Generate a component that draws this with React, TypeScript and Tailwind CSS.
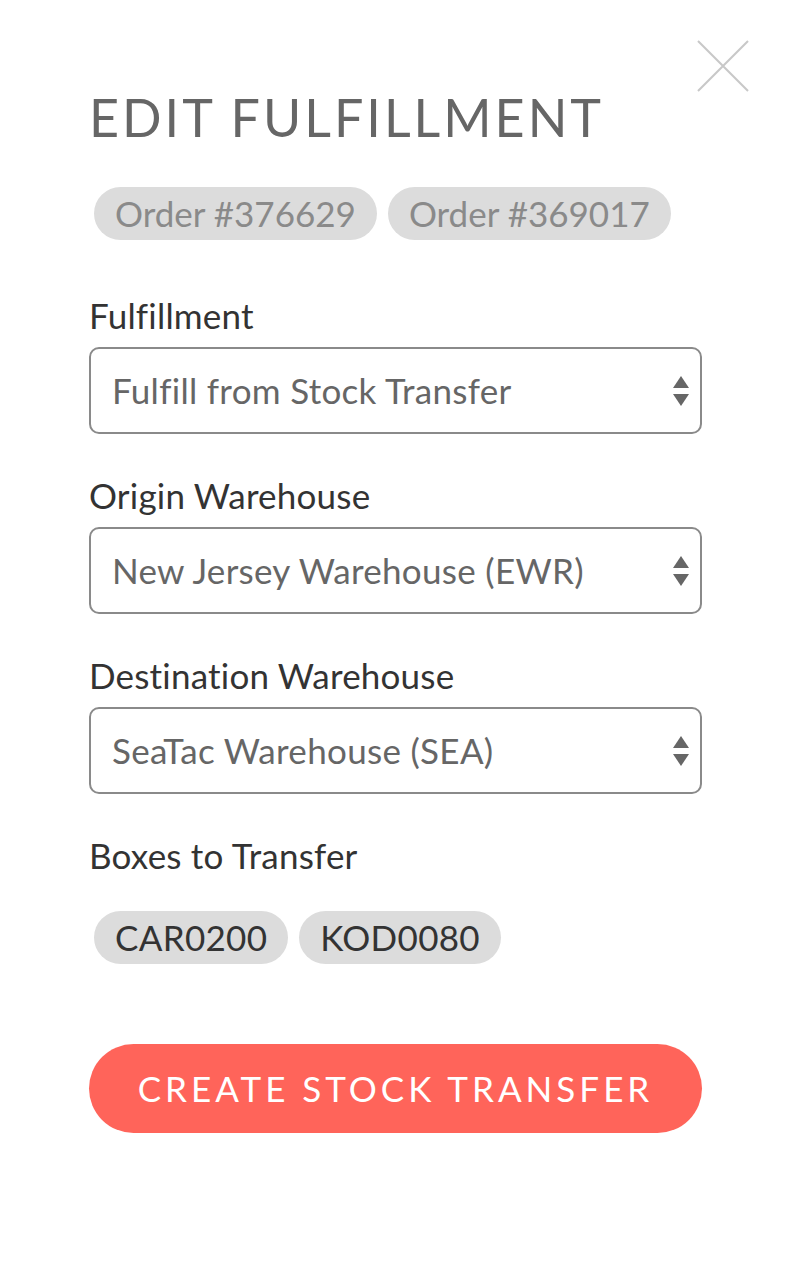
import React from "react";

function Chip({ children, dark }: { children: React.ReactNode; dark?: boolean }) {
  return (
    <span
      className={`inline-flex h-[53px] items-center rounded-full bg-[#dcdcdc] px-[21px] text-[35px] leading-none ${
        dark ? "text-[#333333] tracking-[0.3px]" : "text-[#8a8a8a] tracking-[0px]"
      }`}
    >
      {children}
    </span>
  );
}

function Arrows() {
  return (
    <svg width="18" height="34" viewBox="0 0 18 34" className="shrink-0">
      <path d="M9 2 L17 14 L1 14 Z" fill="#666666" />
      <path d="M9 32 L17 20 L1 20 Z" fill="#666666" />
    </svg>
  );
}

function Field({ label, value }: { label: string; value: string }) {
  return (
    <div className="flex flex-col">
      <div className="text-[35px] leading-none tracking-[0.2px] text-[#333333]">{label}</div>
      <div className="mt-[14px] flex h-[87px] items-center justify-between rounded-[10px] border-2 border-[#8a8a8a] pl-[21px] pr-[10px]">
        <span className="text-[35px] leading-none tracking-[0.3px] text-[#666666]">{value}</span>
        <Arrows />
      </div>
    </div>
  );
}

export default function App() {
  return (
    <div
      className="relative h-[1262px] w-[794px] bg-white"
      style={{ fontFamily: "Lato, 'Open Sans', sans-serif" }}
    >
      <button className="absolute left-[697px] top-[40px] h-[52px] w-[52px]" aria-label="Close">
        <svg width="52" height="52" viewBox="0 0 52 52">
          <path d="M1 1 L51 51 M51 1 L1 51" stroke="#c8c8c8" strokeWidth="2" />
        </svg>
      </button>
      <div className="flex flex-col pl-[89px] pr-[92px] pt-[91px]">
        <h1 className="text-[52px] leading-none font-normal tracking-[3px] text-[#666666]">
          EDIT FULFILLMENT
        </h1>
        <div className="mt-[44px] flex gap-[11px] pl-[5px]">
          <Chip>Order #376629</Chip>
          <Chip>Order #369017</Chip>
        </div>
        <div className="mt-[58px] flex flex-col gap-[44px]">
          <Field label="Fulfillment" value="Fulfill from Stock Transfer" />
          <Field label="Origin Warehouse" value="New Jersey Warehouse (EWR)" />
          <Field label="Destination Warehouse" value="SeaTac Warehouse (SEA)" />
        </div>
        <div className="mt-[44px] text-[35px] leading-none tracking-[0.2px] text-[#333333]">
          Boxes to Transfer
        </div>
        <div className="mt-[38px] flex gap-[11px] pl-[5px]">
          <Chip dark>CAR0200</Chip>
          <Chip dark>KOD0080</Chip>
        </div>
        <button className="mt-[80px] flex h-[89px] w-full items-center justify-center rounded-full bg-[#ff645a] text-[35px] leading-none tracking-[4px] text-white">
          CREATE STOCK TRANSFER
        </button>
      </div>
    </div>
  );
}
